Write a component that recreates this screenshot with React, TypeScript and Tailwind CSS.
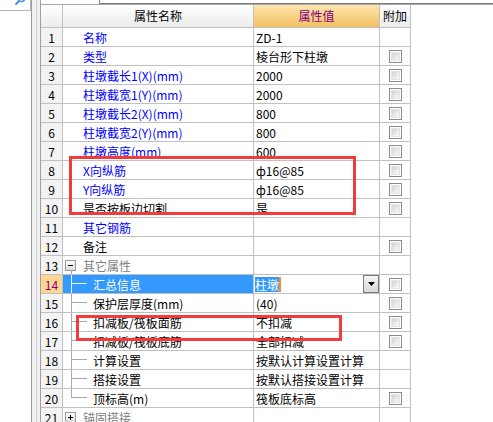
type Tone = 'blue' | 'black' | 'gray';
type Tree = 'minus' | 'plus' | 'child' | 'last';

interface Row {
  name: string;
  value?: string;
  tone: Tone;
  check?: boolean;
  tree?: Tree;
}

const rows: Row[] = [
  { name: '名称', value: 'ZD-1', tone: 'blue' },
  { name: '类型', value: '棱台形下柱墩', tone: 'blue', check: true },
  { name: '柱墩截长1(X)(mm)', value: '2000', tone: 'blue', check: true },
  { name: '柱墩截宽1(Y)(mm)', value: '2000', tone: 'blue', check: true },
  { name: '柱墩截长2(X)(mm)', value: '800', tone: 'blue', check: true },
  { name: '柱墩截宽2(Y)(mm)', value: '800', tone: 'blue', check: true },
  { name: '柱墩高度(mm)', value: '600', tone: 'blue', check: true },
  { name: 'X向纵筋', value: 'ф16@85', tone: 'blue', check: true },
  { name: 'Y向纵筋', value: 'ф16@85', tone: 'blue', check: true },
  { name: '是否按板边切割', value: '是', tone: 'black', check: true },
  { name: '其它钢筋', tone: 'blue' },
  { name: '备注', tone: 'black', check: true },
  { name: '其它属性', tone: 'gray', tree: 'minus' },
  { name: '汇总信息', value: '柱墩', tone: 'black', check: true, tree: 'child' },
  { name: '保护层厚度(mm)', value: '(40)', tone: 'black', check: true, tree: 'child' },
  { name: '扣减板/筏板面筋', value: '不扣减', tone: 'black', check: true, tree: 'child' },
  { name: '扣减板/筏板底筋', value: '全部扣减', tone: 'black', check: true, tree: 'child' },
  { name: '计算设置', value: '按默认计算设置计算', tone: 'black', tree: 'child' },
  { name: '搭接设置', value: '按默认搭接设置计算', tone: 'black', tree: 'child' },
  { name: '顶标高(m)', value: '筏板底标高', tone: 'black', check: true, tree: 'last' },
  { name: '锚固搭接', tone: 'gray', tree: 'plus' },
];

const toneClass: Record<Tone, string> = {
  blue: 'text-[#0000ff]',
  black: 'text-black',
  gray: 'text-[#808080]',
};

function CheckBox() {
  return (
    <div className="w-[13px] h-[13px] border border-[#8c8c8c] p-px bg-white">
      <div className="w-full h-full border border-[#e4e4e4] bg-linear-to-br from-[#d2d2d2] to-[#fbfbfb]" />
    </div>
  );
}

function ExpandBox({ open }: { open: boolean }) {
  return (
    <div className="relative w-[11px] h-[11px] border border-[#9a9a9a] bg-linear-to-b from-white to-[#dcdcdc] flex items-center justify-center">
      <div className="w-[5px] h-px bg-black" />
      {!open && <div className="absolute w-px h-[5px] bg-black" />}
    </div>
  );
}

function TreeLines({ last, light }: { last: boolean; light: boolean }) {
  const c = light ? '#e8f2ff' : '#a8a8a8';
  return (
    <svg width="24" height="18" className="shrink-0">
      <line x1="8.5" y1="0" x2="8.5" y2={last ? 9 : 18} stroke={c} strokeWidth="1" />
      <line x1="8.5" y1="8.5" x2="24" y2="8.5" stroke={c} strokeWidth="1" />
    </svg>
  );
}

function NameCell({ row, selected }: { row: Row; selected: boolean }) {
  const base = `h-[19px] border-r border-b border-[#c0c0c0] flex items-center overflow-hidden whitespace-nowrap ${
    selected ? 'bg-[#3399ff] text-white' : toneClass[row.tone]
  }`;

  if (row.tree === 'minus' || row.tree === 'plus') {
    return (
      <div className={base}>
        <div className="relative w-[20px] h-full shrink-0 flex items-center pl-[2px]">
          <ExpandBox open={row.tree === 'minus'} />
          {row.tree === 'minus' && <div className="absolute left-[8px] top-[15px] w-px h-[3px] bg-[#a8a8a8]" />}
        </div>
        <span className="pt-[2px]">{row.name}</span>
      </div>
    );
  }

  if (row.tree === 'child' || row.tree === 'last') {
    return (
      <div className={base}>
        <TreeLines last={row.tree === 'last'} light={selected} />
        <span className="pl-[6px] pt-[2px]">{row.name}</span>
      </div>
    );
  }

  return (
    <div className={base}>
      <span className="pl-[20px] pt-[2px]">{row.name}</span>
    </div>
  );
}

function ValueCell({ row, editing }: { row: Row; editing: boolean }) {
  if (editing) {
    return (
      <div className="h-[19px] border-r border-b border-[#c0c0c0] flex items-stretch bg-white">
        <div className="flex-1 flex items-center pl-px">
          <span className="bg-[#3399ff] text-white h-[15px] flex items-center pt-[1px]">{row.value}</span>
          <span className="w-[2px] h-[15px] bg-[#ff8c1a]" />
        </div>
        <div className="w-[16px] border border-[#7a7a7a] bg-linear-to-b from-[#f6f6f6] to-[#d8d8d8] flex items-center justify-center">
          <svg width="7" height="4" viewBox="0 0 7 4">
            <path d="M0 0h7L3.5 4z" fill="#000" />
          </svg>
        </div>
      </div>
    );
  }
  return (
    <div className="h-[19px] border-r border-b border-[#c0c0c0] flex items-center pl-[2px] whitespace-nowrap overflow-hidden text-black">
      <span className="pt-[2px]">{row.value}</span>
    </div>
  );
}

export default function App() {
  return (
    <div className="w-[493px] h-[422px] overflow-hidden bg-white flex font-['Noto_Sans_CJK_SC','Liberation_Sans',sans-serif] text-[12px] leading-none">
      {/* left tree panel */}
      <div className="w-[31px] shrink-0 flex flex-col">
        <div className="h-[11px] border-b border-r border-[#b8b8b8] overflow-hidden flex justify-end pr-[3px]">
          <svg width="13" height="13" viewBox="0 0 13 13" className="-mt-[7px]">
            <circle cx="7.5" cy="5" r="3.5" fill="none" stroke="#3d8fe0" strokeWidth="1.6" />
            <line x1="5" y1="8" x2="1.5" y2="11.5" stroke="#3d8fe0" strokeWidth="2" />
          </svg>
        </div>
      </div>
      <div className="w-[5px] shrink-0 border-l border-[#9c9c9c] bg-[#f0f0f0]" />
      <div className="w-[4px] shrink-0 border-l border-[#cdcdcd] bg-[#f0f0f0]" />

      {/* property grid */}
      <div className="flex-1 border-l border-[#a0a0a0] flex flex-col">
        <div className="h-[6px] flex">
          <div className="w-[58px]" />
          <div className="flex-1 h-[4px] border-l border-b border-[#7c7c7c]" />
        </div>
        <div className="border-t border-[#a8a8a8] relative">
          <div className="grid grid-cols-[22px_191px_126px_31px] w-[370px]">
            <div className="h-[23px] border-r border-b border-[#c0c0c0] bg-linear-to-b from-white to-[#ececec]" />
            <div className="h-[23px] border-r border-b border-[#c0c0c0] bg-linear-to-b from-white to-[#ececec] flex items-center justify-center text-black">
              属性名称
            </div>
            <div className="h-[23px] border-r border-b border-[#c0c0c0] bg-linear-to-b from-[#fde6ad] to-[#f3c060] flex items-center justify-center text-[#800080]">
              属性值
            </div>
            <div className="h-[23px] border-r border-b border-[#c0c0c0] bg-linear-to-b from-white to-[#ececec] flex items-center justify-center text-black">
              附加
            </div>

            {rows.map((row, i) => {
              const selected = i === 13;
              return (
                <div key={i} className="contents">
                  <div
                    className={`h-[19px] border-r border-b border-[#c0c0c0] flex items-center justify-center pt-[1px] ${
                      selected ? 'bg-[#ffd68f] text-[#800080]' : 'bg-[#f3f3f3] text-black'
                    }`}
                  >
                    {i + 1}
                  </div>
                  <NameCell row={row} selected={selected} />
                  <ValueCell row={row} editing={selected} />
                  <div className="h-[19px] border-r border-b border-[#c0c0c0] flex items-center justify-center">
                    {row.check && <CheckBox />}
                  </div>
                </div>
              );
            })}
          </div>
        </div>
      </div>

      {/* red annotation boxes */}
      <div className="absolute left-[69px] top-[156px] w-[287px] h-[59px] border-[3px] border-[#f23b3b] pointer-events-none" />
      <div className="absolute left-[76px] top-[315px] w-[266px] h-[26px] border-[3px] border-[#f23b3b] pointer-events-none" />
    </div>
  );
}
